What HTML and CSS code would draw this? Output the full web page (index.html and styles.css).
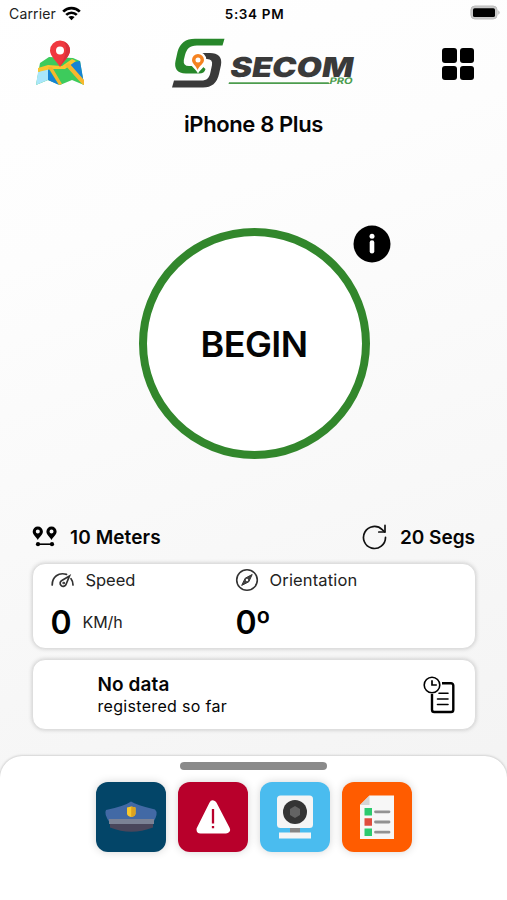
FILE: index.html
```html
<!DOCTYPE html>
<html lang="en">
<head>
<meta charset="utf-8">
<title>Secom Pro</title>
<link rel="stylesheet" href="styles.css">
</head>
<body>
<div class="screen">
  <div class="status">
    <div class="carrier"><span class="carrier-name">Carrier</span>
      <svg width="19" height="15" viewBox="0 0 19 15"><g fill="none" stroke="#000" stroke-width="2.7"><path d="M1.2 5.6C5.8 .9 13.2 .9 17.8 5.6"/><path d="M4.2 8.9c3-2.9 7.6-2.9 10.6 0"/></g><path d="M6.4 11.1c1.8-1.6 4.4-1.6 6.2 0L9.5 14.2z"/></svg>
    </div>
    <span class="clock">5:34 PM</span>
    <svg class="battery" width="31" height="16" viewBox="0 0 31 16"><rect x=".9" y="1" width="26.2" height="13" rx="4" fill="#c9c9c9" stroke="#bdbdbd" stroke-width="1"/><rect x="3" y="3.2" width="22" height="8.8" rx="1.6"/><path d="M28.4 5.2q2.4 2.3 0 4.6z" fill="#aaa"/></svg>
  </div>

  <header class="header">
    <svg class="map" width="50" height="48" viewBox="0 0 50 48">
      <path d="M5 23L14 17 38 18 45 21 49 45 37 40 25 45 13 40 1 45z" fill="#3dcb5c"/>
      <path d="M3 32L13 28V40L1 45z" fill="#a9e6fb"/>
      <path d="M13 28L24 45 13 40z" fill="#1683d4"/>
      <path d="M34 23L45 21 48.500 41z" fill="#1683d4"/>
      <path d="M3 28L13 25 27 26 37 19 41 21 30 29 16 29 3 32z" fill="#fac52f"/>
      <path d="M13 27h4L27 44l-3 1zM30 25l4-2L49 40v5l-2-1z" fill="#f8b72d"/>
      <path d="M25 27C22 22 15 16 15 10.500a10 10 0 0 1 20 0C35 16 28 22 25 27z" fill="#f0383f"/>
      <path d="M25 27C28 22 35 16 35 10.500A10 10 0 0 0 29 1.500C34 10 29 18 25 27z" fill="#d9303c"/>
      <circle cx="25" cy="10.500" r="4" fill="#fff"/>
    </svg>
    <svg class="logo" width="187" height="52" viewBox="0 0 187 52">
      <path d="M19 23Q19 15 27 15H39C47 15 51.500 19 50 27L48 36Q45 49.500 32 49.500H1L3 42.500H30C36 42.500 38.500 40 39.500 34L41 27Q42 21 36 21H27z" fill="#3a3a3a"/>
      <path d="M53.500.800L51.500 7.500H26C18 7.500 16 11 14 17L12.800 22Q12 28 18 28H31L34.500 31Q33.500 35.500 28 35.500H15C6 35.500 3 30 4.500 23L6.500 14Q10 .8 24 .8z" fill="#27872a"/>
      <path d="M27 35.500C24 29.500 18.200 28 18.200 22a8.500 8.500 0 0 1 17.200 0C35.400 28 30.500 30 27 35.500z" fill="#fff"/>
      <path fill-rule="evenodd" d="M26.500 32C25 27.500 21 25.500 21 22a6 6 0 0 1 12 0C33 25.500 28.500 27.500 26.500 32zM27 24.600a2.500 2.500 0 1 0 0-5 2.500 2.500 0 0 0 0 5z" fill="#f58220"/>
      <text class="brand" transform="translate(58 38.500) skewX(-10)" textLength="123" lengthAdjust="spacingAndGlyphs">SECOM</text>
      <path d="M58 44.200H157.500L159 46H57.500z" fill="#4c9c4e"/>
      <text class="pro" transform="translate(158 46.200) skewX(-12)" textLength="23" lengthAdjust="spacingAndGlyphs">PRO</text>
    </svg>
    <div class="menu"><i></i><i></i><i></i><i></i></div>
  </header>

  <h1 class="device"><span>iPhone 8 Plus</span></h1>

  <main class="dial-area">
    <div class="dial"><span>BEGIN</span>
      <svg class="info" width="38" height="38" viewBox="0 0 38 38"><circle cx="19" cy="19" r="18.500"/><circle cx="19" cy="11.200" r="2.500" fill="#fff"/><path d="M19 17.500v8.800" stroke="#fff" stroke-width="4.600" stroke-linecap="round"/></svg>
    </div>
  </main>

  <section class="rates">
    <div class="rate"><svg width="26" height="22" viewBox="0 0 26 22"><path fill-rule="evenodd" d="M5.800 14C4 10.500.7 8.800.7 5.500a5.100 5.100 0 0 1 10.200 0C10.900 8.800 7.600 10.500 5.800 14zM5.800 7.400a2 2 0 1 0 0-4 2 2 0 0 0 0 4zM19.500 14C17.700 10.500 14.400 8.800 14.400 5.500a5.100 5.100 0 0 1 10.200 0C24.600 8.800 21.300 10.500 19.500 14zM19.500 7.400a2 2 0 1 0 0-4 2 2 0 0 0 0 4z"/><path d="M6 18.200h14" stroke="#000" stroke-width="1.600"/><circle cx="6" cy="18.200" r="2.100"/><circle cx="20" cy="18.200" r="2.100"/></svg><span class="meters">10 Meters</span></div>
    <div class="rate"><svg width="26" height="26" viewBox="0 0 26 26" fill="none" stroke="#111" stroke-width="1.700" stroke-linecap="round" stroke-linejoin="round"><path d="M23.500 13.400A11 11 0 1 1 20.200 5.600L22.700 8"/><path d="M23 1.400V8h-6.200"/></svg><span class="segs">20 Segs</span></div>
  </section>

  <section class="card metrics">
    <div class="metric">
      <div class="label"><svg width="24" height="18" viewBox="0 0 24 18" fill="none" stroke="#333" stroke-width="1.700" stroke-linecap="round"><path d="M1.200 14C1.200 6 7.500 1 15.500 3.400M20 7.700c1.400 1.700 2 3.500 2 6.300"/><path d="M18.500 5L15.200 13a3.100 3.100 0 1 1-4.400-3.600z"/><circle cx="12.700" cy="12" r=".5"/></svg><span class="speed">Speed</span></div>
      <div class="value"><b>0</b><span>KM/h</span></div>
    </div>
    <div class="metric">
      <div class="label orient"><svg width="24" height="24" viewBox="0 0 24 24" fill="none" stroke="#333" stroke-width="1.600"><circle cx="12" cy="12" r="10.300"/><path d="M17.200 6.500L13.800 13.800 6.700 17.400 10.200 10.200z" fill="#444" stroke-width="1"/><circle cx="12" cy="12" r="1.200" fill="#fff" stroke="none"/></svg><span class="orientation">Orientation</span></div>
      <div class="value degrees"><b>0º</b></div>
    </div>
  </section>

  <section class="card record">
    <div class="record-text"><strong>No data</strong><span>registered so far</span></div>
    <svg width="32" height="38" viewBox="0 0 32 38" fill="none" stroke="#000"><path d="M19 7.200h9a2.300 2.300 0 0 1 2.300 2.300v24.200A2.300 2.300 0 0 1 28 36H11.300A2.300 2.300 0 0 1 9 33.700V18" stroke-width="2.400"/><path d="M16 17.300h9M14.500 23h10.500M14.500 28.500h10.500" stroke-width="1.600" stroke-linecap="round"/><circle cx="9" cy="9" r="7.800" fill="#fff" stroke-width="1.600"/><path d="M9 4.200V9h4.800" stroke-width="1.700"/></svg>
  </section>

  <section class="sheet">
    <div class="handle"></div>
    <div class="tiles">
      <div class="tile police"><svg width="70" height="70" viewBox="0 0 70 70"><path d="M14 41h43v4.500Q35 54 14 45.500z" fill="#49465b"/><path d="M35 19.500Q40 23 59 27.500 63 31 57 41H14Q7.500 32 10 28 29 24 35 19.500z" fill="#4269a5"/><path d="M13 37h45v5H13z" fill="#7b8295"/><path d="M31 25.500l4.200-1 4.300 1v6q0 2.600-4.300 3.600-4.200-1-4.200-3.600z" fill="#f9c82c"/><path d="M35.200 24.500l4.300 1v6q0 2.600-4.300 3.600z" fill="#dca21e"/></svg></div>
      <div class="tile alert"><svg width="70" height="70" viewBox="0 0 70 70"><path d="M35 22.500L48 47.500H22.500z" fill="#fff" stroke="#fff" stroke-width="8" stroke-linejoin="round"/><path d="M35 27v14.500M35 44v2.200" stroke="#b8002b" stroke-width="2.300"/></svg></div>
      <div class="tile camera"><svg width="70" height="70" viewBox="0 0 70 70"><path d="M30 44h10v7H30z" fill="#858585"/><rect x="17" y="13.500" width="36" height="32.500" rx="3.500" fill="#f5f5f5"/><circle cx="35" cy="30" r="12" fill="#343434"/><path d="M30 27l5-3 5 3v6l-5 3-5-3z" fill="#636363"/><path d="M19 50.500h32v6H19z" fill="#f5f5f5"/></svg></div>
      <div class="tile tasks"><svg width="70" height="70" viewBox="0 0 70 70"><path d="M27.500 13.500H52v43.500H18V23z" fill="#f7f7f7"/><path d="M27.500 13.500V23H18z" fill="#d4d4d4"/><path d="M22.500 26h7.500v7.500h-7.500zM22.500 46.500h7.500V54h-7.500z" fill="#2dca6f"/><path d="M22.500 36.200h7.500v7.500h-7.500z" fill="#df4d3e"/><path d="M33.500 29.800H47M33.500 40H47M33.500 50.200H47" stroke="#929292" stroke-width="2.800" stroke-linecap="round"/></svg></div>
    </div>
  </section>
</div>
</body>
</html>
```

FILE: styles.css
```css
* { box-sizing: border-box; }
body { margin: 0; font-family: Inter, "Liberation Sans", sans-serif; color: #050505; }
svg { display: block; flex: none; }
.screen { width: 507px; height: 900px; overflow: hidden; display: flex; flex-direction: column; background: linear-gradient(160deg, #fff 0%, #fdfdfd 25%, #f8f8f8 58%, #f2f2f2 100%); }
.status { height: 28px; display: grid; grid-template-columns: 1fr auto 1fr; align-items: center; padding: 0 6px 0 9px; font-size: 14px; }
.carrier { display: flex; align-items: center; gap: 6px; color: #222; margin-top: -2px; }
.carrier-name { letter-spacing: .15px; }
.clock { font-weight: 600; font-size: 13.5px; letter-spacing: .65px; margin: -1px 0 0 -1px; }
.battery { justify-self: end; margin-top: -2px; }
.header { height: 70px; display: grid; grid-template-columns: 136px 187px 1fr; align-items: start; padding: 10px 33px 0 35px; }
.map { margin-top: 2px; }
.brand { font: 900 27.5px Inter, sans-serif; fill: #3a3a3a; }
.pro { font: 700 9px Inter, sans-serif; fill: #4c9c4e; }
.menu { justify-self: end; display: grid; grid-template-columns: 14.5px 14.5px; grid-auto-rows: 14.5px; gap: 3px; margin-top: 10px; }
.menu i { background: #000; border-radius: 3px; }
.device { margin: 0; height: 52px; line-height: 53px; text-align: center; font-size: 22px; font-weight: 600; letter-spacing: -.38px; }
.dial-area { height: 366px; display: flex; justify-content: center; padding: 78px 0 0 1px; }
.dial { position: relative; width: 231px; height: 231px; border: 8px solid #32872c; border-radius: 50%; background: #fff; display: flex; align-items: center; justify-content: center; font-size: 36px; font-weight: 600; letter-spacing: -.6px; }
.info { position: absolute; left: 206.5px; top: -11.5px; }
.rates { height: 47px; padding: 0 32px; display: flex; justify-content: space-between; align-items: center; font-size: 19px; font-weight: 600; }
.rate { display: flex; align-items: center; gap: 12px; margin-top: -5px; }
.meters { letter-spacing: .1px; }
.card { margin: 0 31.5px; background: #fff; border: 1px solid #dedede; border-radius: 13px; box-shadow: 0 0 4px rgba(0,0,0,.18); flex: none; }
.metrics { height: 86px; padding: 4px 18px; display: grid; grid-template-columns: 184px 1fr; }
.label { height: 24px; display: flex; align-items: center; gap: 11px; font-size: 16.5px; color: #222; }
.speed { letter-spacing: -.05px; }
.orientation { letter-spacing: .15px; }
.value { height: 48px; margin-top: 6px; display: flex; align-items: center; gap: 11px; font-size: 16px; color: #222; }
.value b { font-size: 32px; font-weight: 600; color: #000; }
.value span { letter-spacing: -.1px; }
.degrees b { letter-spacing: -.8px; margin-left: 1px; }
.record { height: 71px; margin-top: 10px; padding: 0 20px 0 65px; display: flex; align-items: center; justify-content: space-between; }
.record-text { display: flex; flex-direction: column; font-size: 16px; line-height: 22px; letter-spacing: .32px; }
.record-text strong { font-size: 19px; font-weight: 600; letter-spacing: .1px; position: relative; top: 1px; }
.sheet { height: 144px; margin-top: 26px; background: #fff; border-radius: 22px 22px 0 0; box-shadow: 0 0 3px rgba(0,0,0,.28); display: flex; flex-direction: column; align-items: center; padding-top: 6px; flex: none; }
.handle { width: 147px; height: 8px; border-radius: 4px; background: #8a8a8a; }
.tiles { margin-top: 12px; display: flex; gap: 12px; }
.tile { width: 70px; height: 70px; border-radius: 12px; overflow: hidden; box-shadow: 0 0 9px rgba(0,0,0,.17); }
.police { background: #034568; }
.alert { background: #b8002b; }
.camera { background: #4abcef; }
.tasks { background: #ff5c00; }
```
